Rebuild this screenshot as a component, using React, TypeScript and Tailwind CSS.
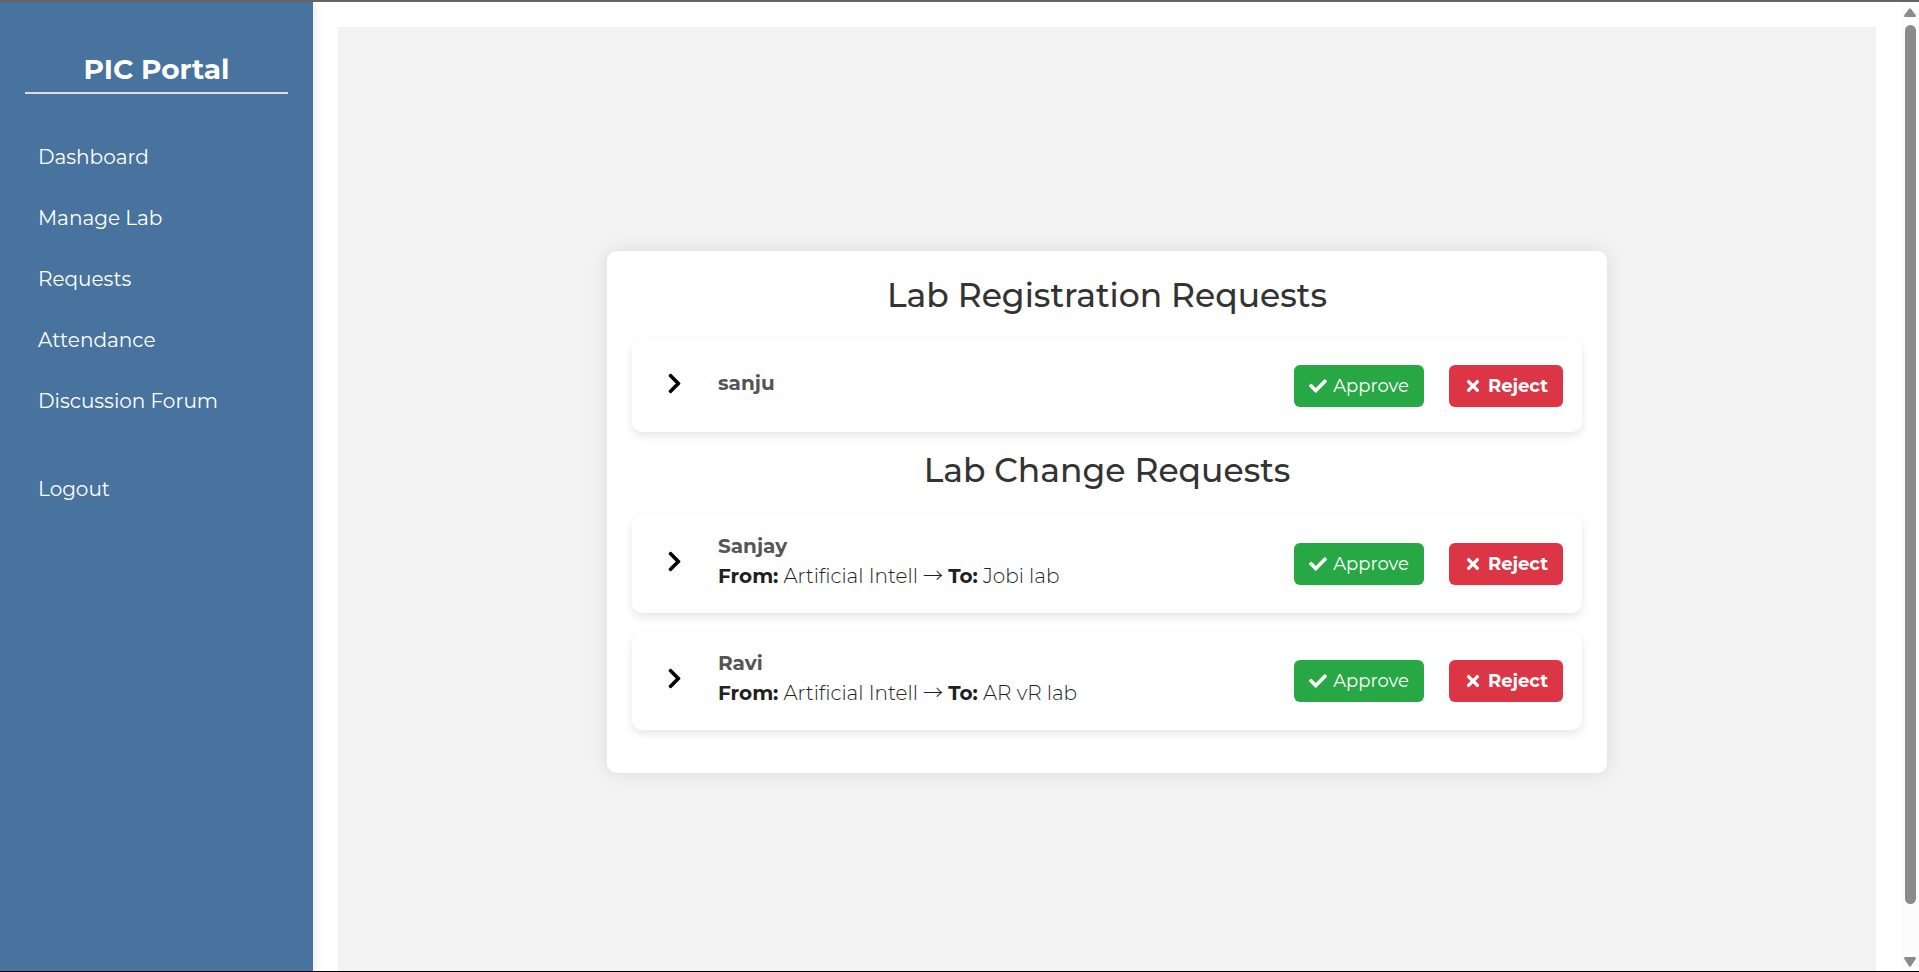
import type { ReactNode } from "react";
import { FaCheck, FaChevronRight, FaTimes } from "react-icons/fa";

type ChangeRequest = { name: string; from: string; to: string };

const links = ["Dashboard", "Manage Lab", "Requests", "Attendance", "Discussion Forum"];

const registrations = ["sanju"];

const changes: ChangeRequest[] = [
  { name: "Sanjay", from: "Artificial Intell", to: "Jobi lab" },
  { name: "Ravi", from: "Artificial Intell", to: "AR vR lab" },
];

function NavLink({ label }: { label: string }) {
  return (
    <a href="#" className="block px-[13px] py-2 text-xl leading-[30px] text-white">
      {label}
    </a>
  );
}

function Sidebar() {
  return (
    <aside className="relative z-10 w-[313px] shrink-0 bg-[#47739e] px-[25px] pt-[49px] shadow-[2px_0_10px_rgba(0,0,0,0.1)]">
      <h1 className="border-b-2 border-[#dddddd] pb-[5px] text-center text-[28px] leading-9 font-bold text-white">
        PIC Portal
      </h1>
      <nav className="mt-10 flex flex-col gap-[15px]">
        {links.map((label) => (
          <NavLink key={label} label={label} />
        ))}
        <div className="mt-[27px]">
          <NavLink label="Logout" />
        </div>
      </nav>
    </aside>
  );
}

function Heading({ children }: { children: ReactNode }) {
  return (
    <h2 className="mb-[26px] text-center text-[33px] leading-[38px] font-medium text-[#333333]">{children}</h2>
  );
}

function Row({ name, children, roomy = false }: { name: string; children?: ReactNode; roomy?: boolean }) {
  return (
    <li
      className={`mb-[19px] flex items-center justify-between rounded-[10px] bg-white pr-[19px] pl-[31px] shadow-[0_4px_10px_rgba(0,0,0,0.1)] ${
        roomy ? "py-[25px]" : "py-4"
      }`}
    >
      <div className="flex items-center pb-[6px]">
        <button type="button" aria-label={`Show details for ${name}`} className="mr-8 text-[23px] text-black">
          <FaChevronRight />
        </button>
        <div className="text-xl leading-[30px]">
          <p className="font-bold text-[#555555]">{name}</p>
          {children}
        </div>
      </div>
      <div className="flex gap-[25px]">
        <button
          type="button"
          className="flex h-[42px] w-[130px] items-center justify-center gap-[6px] rounded-md bg-[#28a745] text-lg text-white"
        >
          <FaCheck />
          Approve
        </button>
        <button
          type="button"
          className="flex h-[42px] w-[114px] items-center justify-center gap-[6px] rounded-md bg-[#dc3545] text-lg font-bold text-white"
        >
          <FaTimes />
          Reject
        </button>
      </div>
    </li>
  );
}

function Scrollbar() {
  return (
    <div aria-hidden="true" className="flex w-[18px] shrink-0 flex-col items-center bg-[#fcfcfc] pt-[6px] pb-1">
      <svg width="12" height="9" viewBox="0 0 12 9" fill="#8b8b8b">
        <path d="M5.1.7Q6-.3 6.900.7L11.700 7Q12.300 9 11 9H1Q-.3 9 .3 7Z" />
      </svg>
      <div className="mt-2 mb-[53px] w-[11px] flex-1 rounded-full bg-[#8b8b8b]" />
      <svg width="12" height="10" viewBox="0 0 12 10" fill="#8b8b8b">
        <path d="M5.100 9.300Q6 10.300 6.900 9.300L11.700 2Q12.300 0 11 0H1Q-.3 0 .3 2Z" />
      </svg>
    </div>
  );
}

export default function App() {
  return (
    <div className="flex h-screen overflow-hidden border-t-2 border-b border-t-[#666464] border-b-black bg-white font-['Montserrat','Inter',sans-serif]">
      <Sidebar />
      <main className="min-w-0 flex-1 overflow-hidden p-[25px]">
        <div className="flex h-[calc(100vh-2px)] items-center justify-center bg-[#f3f3f3]">
          <section className="w-full max-w-[1000px] rounded-[10px] bg-white px-[25px] pt-[25px] pb-6 shadow-[0_0_20px_rgba(0,0,0,0.1)]">
            <Heading>Lab Registration Requests</Heading>
            <ul>
              {registrations.map((name) => (
                <Row key={name} name={name} roomy />
              ))}
            </ul>
            <Heading>Lab Change Requests</Heading>
            <ul>
              {changes.map(({ name, from, to }) => (
                <Row key={name} name={name}>
                  <p className="font-light text-[#212121]">
                    <strong className="font-bold">From:</strong> {from}{" "}
                    <span className="font-['Noto_Sans_CJK_JP',sans-serif] leading-none">→</span>{" "}
                    <strong className="font-bold">To:</strong> {to}
                  </p>
                </Row>
              ))}
            </ul>
          </section>
        </div>
      </main>
      <Scrollbar />
    </div>
  );
}
